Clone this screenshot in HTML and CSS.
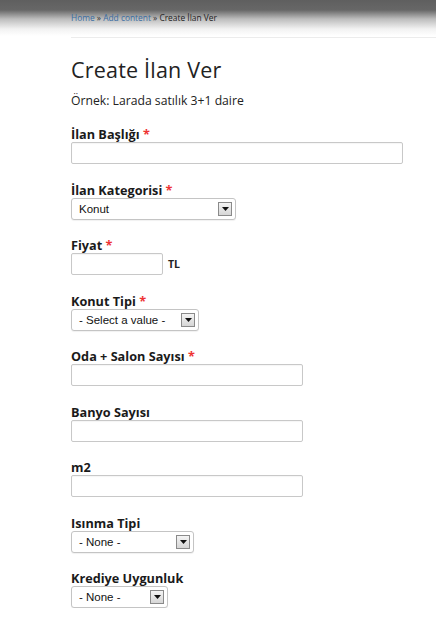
FILE: index.html
```html
<!DOCTYPE html>
<html lang="tr">
<head>
<meta charset="utf-8">
<title>Create İlan Ver</title>
<link rel="stylesheet" href="styles.css">
</head>
<body>
<header class="topbar">
  <nav class="breadcrumb"><a href="#">Home</a> » <a href="#">Add content</a> » <span class="current">Create İlan Ver</span></nav>
</header>
<main class="content">
  <h1 class="title">Create İlan Ver</h1>
  <p class="help">Örnek: Larada satılık 3+1 daire</p>
  <form class="form">
    <div class="field">
      <label class="label">İlan Başlığı <span class="req">*</span></label>
      <input class="input w-title" type="text">
    </div>
    <div class="field">
      <label class="label">İlan Kategorisi <span class="req">*</span></label>
      <div class="select w-kat"><span class="select-text">Konut</span><span class="arrow"><svg width="7" height="4" viewBox="0 0 7 4"><path d="M0 0H7L3.5 4Z" fill="#111"/></svg></span></div>
    </div>
    <div class="field">
      <label class="label">Fiyat <span class="req">*</span></label>
      <div class="row"><input class="input w-price" type="text"><span class="suffix">TL</span></div>
    </div>
    <div class="field">
      <label class="label">Konut Tipi <span class="req">*</span></label>
      <div class="select w-tipi"><span class="select-text">- Select a value -</span><span class="arrow"><svg width="7" height="4" viewBox="0 0 7 4"><path d="M0 0H7L3.5 4Z" fill="#111"/></svg></span></div>
    </div>
    <div class="field">
      <label class="label">Oda + Salon Sayısı <span class="req">*</span></label>
      <input class="input w-mid" type="text">
    </div>
    <div class="field">
      <label class="label">Banyo Sayısı</label>
      <input class="input w-mid" type="text">
    </div>
    <div class="field">
      <label class="label">m2</label>
      <input class="input w-mid" type="text">
    </div>
    <div class="field">
      <label class="label">Isınma Tipi</label>
      <div class="select w-isinma"><span class="select-text">- None -</span><span class="arrow"><svg width="7" height="4" viewBox="0 0 7 4"><path d="M0 0H7L3.5 4Z" fill="#111"/></svg></span></div>
    </div>
    <div class="field">
      <label class="label">Krediye Uygunluk</label>
      <div class="select w-kredi"><span class="select-text">- None -</span><span class="arrow"><svg width="7" height="4" viewBox="0 0 7 4"><path d="M0 0H7L3.5 4Z" fill="#111"/></svg></span></div>
    </div>
  </form>
</main>
</body>
</html>
```
FILE: styles.css
```css
html, body {
  margin: 0;
  padding: 0;
  background: #fff;
}
body {
  font-family: "Open Sans", "DejaVu Sans", sans-serif;
  color: #222;
}
.topbar {
  height: 38px;
  background: linear-gradient(to bottom, #5f5f5f 0px, #676767 10px, #bdbdbd 19px, #f2f2f2 29px, #ffffff 36px);
  box-sizing: border-box;
  padding: 12px 0 0 71px;
}
.breadcrumb {
  font-size: 8.4px;
  line-height: 12px;
  color: #333;
  border-bottom: 1px solid #ececec;
  height: 26px;
  box-sizing: border-box;
}
.breadcrumb a {
  color: #3a6da3;
  text-decoration: none;
}
.breadcrumb .current {
  color: #222;
}
.content {
  padding: 19px 0 0 71px;
}
.title {
  margin: 0;
  font-size: 21.5px;
  font-weight: normal;
  line-height: 26px;
  color: #222;
  letter-spacing: 0.2px;
}
.help {
  margin: 10px 0 0;
  font-size: 12.2px;
  line-height: 16px;
  color: #222;
}
.form {
  margin-top: 17px;
  display: flex;
  flex-direction: column;
  gap: 17.5px;
}
.field {
  display: flex;
  flex-direction: column;
  align-items: flex-start;
}
.label {
  font-size: 12.7px;
  font-weight: bold;
  line-height: 16px;
  color: #1a1a1a;
}
.req {
  color: #e33;
}
.input {
  height: 22px;
  box-sizing: border-box;
  border: 1px solid #c8c8c8;
  border-radius: 2px;
  margin: 0;
  padding: 0 4px;
  background: #fff;
  box-shadow: inset 0 1px 1px rgba(0,0,0,0.04);
}
.w-title { width: 332px; }
.w-price { width: 92px; }
.w-mid { width: 232px; }
.row {
  display: flex;
  align-items: center;
  gap: 5px;
}
.suffix {
  font-size: 10.5px;
  font-weight: bold;
  color: #222;
}
.select {
  height: 22px;
  box-sizing: border-box;
  border: 1px solid #c4c4c4;
  border-radius: 3px;
  display: flex;
  align-items: center;
  justify-content: space-between;
  padding: 0 3px 0 7px;
  background: #fff;
  box-shadow: 0 1px 1px rgba(0,0,0,0.06);
}
.select-text {
  font-family: "Liberation Sans", Arial, sans-serif;
  font-size: 11.5px;
  color: #111;
}
.arrow {
  width: 14px;
  height: 14px;
  box-sizing: border-box;
  border: 1px solid #8a8a8a;
  background: linear-gradient(to bottom, #f4f4f4, #d6d6d6);
  display: flex;
  align-items: center;
  justify-content: center;
}
.w-kat { width: 165px; }
.w-tipi { width: 128px; }
.w-isinma { width: 123px; }
.w-kredi { width: 97px; }
```
